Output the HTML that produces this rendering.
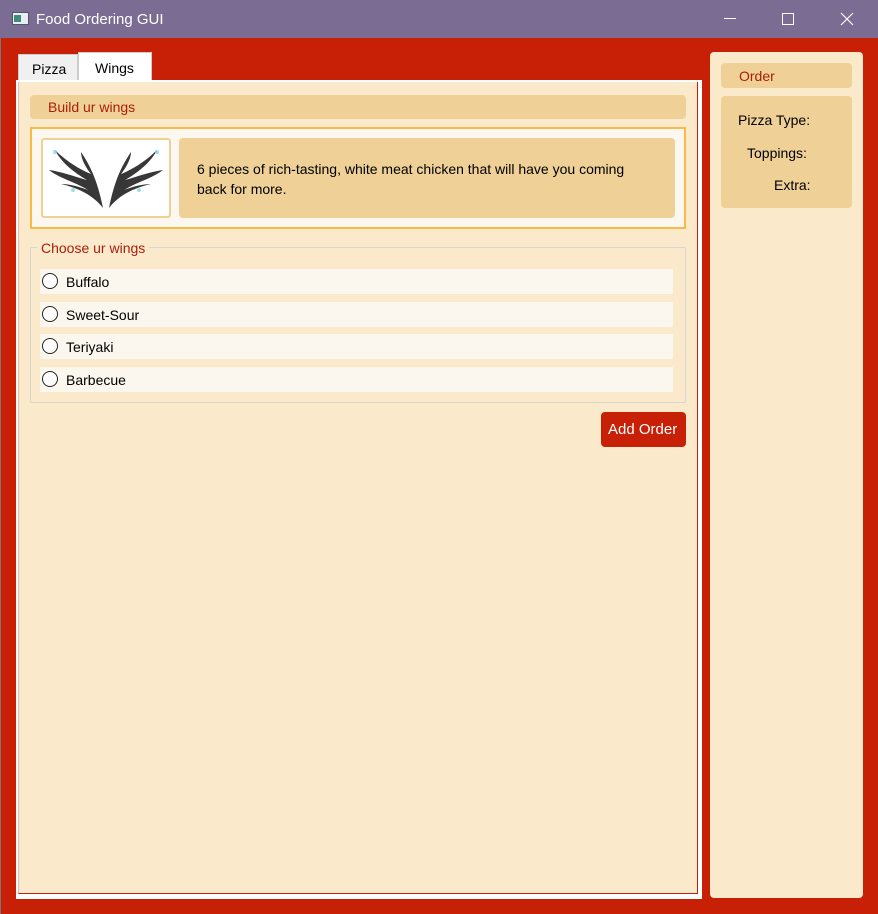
<!DOCTYPE html>
<html><head><meta charset="utf-8"><style>
*{margin:0;padding:0;box-sizing:border-box}
body{width:878px;height:914px;overflow:hidden;background:#c81f07;font-family:"Segoe UI","Liberation Sans",sans-serif;font-size:14px;position:relative;color:#000}
.a{position:absolute}
.title{left:0;top:0;width:878px;height:38px;background:#7b6c94;color:#fff;font-size:15px}
.radio{width:16px;height:16px;border:1.3px solid #222;border-radius:50%;background:#fff}
.row{left:40px;width:633px;height:25px;background:#fbf6ee}
.row span{position:absolute;left:26px;top:5px}
.row .radio{position:absolute;left:2px;top:4px}
</style></head><body>
<div class="a title">
  <div class="a" style="left:12px;top:12px;width:17px;height:13px;background:#e8eef2;border:1px solid #556"></div>
  <div class="a" style="left:14px;top:15px;width:7px;height:7px;background:#3d8b7a"></div>
  <div class="a" style="left:36px;top:11px">Food Ordering GUI</div>
  <div class="a" style="left:724px;top:18px;width:12px;height:1px;background:#fff"></div>
  <div class="a" style="left:782px;top:13px;width:12px;height:12px;border:1px solid #fff"></div>
  <svg class="a" style="left:840px;top:12px" width="14" height="14"><path d="M1 1L13 13M13 1L1 13" stroke="#fff" stroke-width="1.2"/></svg>
</div>
<div class="a" style="left:0;top:38px;width:1px;height:876px;background:#777"></div>
<div class="a" style="left:18px;top:54px;width:60px;height:27px;background:#f0f0f0;border:1px solid #ccc;border-bottom:none"><span class="a" style="left:13px;top:6px">Pizza</span></div>
<div class="a" style="left:78px;top:52px;width:74px;height:30px;background:#fff;border:1px solid #ccc;border-bottom:none"><span class="a" style="left:16px;top:7px">Wings</span></div>
<div class="a" style="left:16px;top:80px;width:686px;height:819px;background:#fff"></div>
<div class="a" style="left:18px;top:82px;width:680px;height:812px;background:#fbe9cb;border-right:1px solid #c81f07;border-bottom:1px solid #c81f07;border-left:1px solid #f3b9a8"></div>
<div class="a" style="left:30px;top:95px;width:656px;height:24px;background:#efd097;border-radius:4px;color:#a8200c"><span class="a" style="left:18px;top:4px">Build ur wings</span></div>
<div class="a" style="left:30px;top:127px;width:656px;height:102px;background:#fcf7ef;border:2px solid #fbb94a"></div>
<div class="a" style="left:41px;top:138px;width:130px;height:80px;background:#fff;border:2px solid #efd097;border-radius:3px">
<svg width="126" height="76" viewBox="0 0 126 76"><g fill="#222" opacity=".9"><path d="M60 68C50 55 35 48 18 44C28 44 40 48 45 50C32 42 16 38 6 30C20 32 36 38 44 40C30 32 18 22 12 10C24 22 38 30 48 34C40 24 38 16 38 12C46 24 54 38 60 68Z"/><path d="M66 68C76 55 91 48 108 44C98 44 86 48 81 50C94 42 110 38 120 30C106 32 90 38 82 40C96 32 108 22 114 10C102 22 88 30 78 34C86 24 88 16 88 12C80 24 72 38 66 68Z"/></g><g fill="#6fd3e0" opacity=".7"><circle cx="12" cy="12" r="2"/><circle cx="114" cy="12" r="2"/><circle cx="30" cy="50" r="2"/><circle cx="96" cy="50" r="2"/></g></svg></div>
<div class="a" style="left:179px;top:138px;width:496px;height:80px;background:#efd097;border-radius:4px"><div class="a" style="left:18px;top:21px;line-height:20px">6 pieces of rich-tasting, white meat chicken that will have you coming<br>back for more.</div></div>
<div class="a" style="left:30px;top:247px;width:656px;height:156px;border:1px solid #d8d6d0;border-radius:2px"></div>
<div class="a" style="left:37px;top:240px;padding:0 4px;background:#fbe9cb;color:#a8200c">Choose ur wings</div>
<div class="a row" style="top:269px"><div class="radio"></div><span>Buffalo</span></div>
<div class="a row" style="top:302px"><div class="radio"></div><span>Sweet-Sour</span></div>
<div class="a row" style="top:334px"><div class="radio"></div><span>Teriyaki</span></div>
<div class="a row" style="top:367px"><div class="radio"></div><span>Barbecue</span></div>
<div class="a" style="left:601px;top:412px;width:85px;height:35px;background:#c81f07;border-radius:4px;color:#fff;font-size:15px"><span class="a" style="left:7px;top:9px">Add Order</span></div>
<div class="a" style="left:710px;top:52px;width:153px;height:846px;background:#fbe9cb;border-radius:4px"></div>
<div class="a" style="left:721px;top:63px;width:131px;height:25px;background:#efd097;border-radius:4px;color:#a8200c"><span class="a" style="left:18px;top:5px">Order</span></div>
<div class="a" style="left:721px;top:96px;width:131px;height:112px;background:#efd097;border-radius:4px">
<span class="a" style="left:17px;top:16px">Pizza Type:</span>
<span class="a" style="left:26px;top:49px">Toppings:</span>
<span class="a" style="left:53px;top:81px">Extra:</span>
</div>
</body></html>
